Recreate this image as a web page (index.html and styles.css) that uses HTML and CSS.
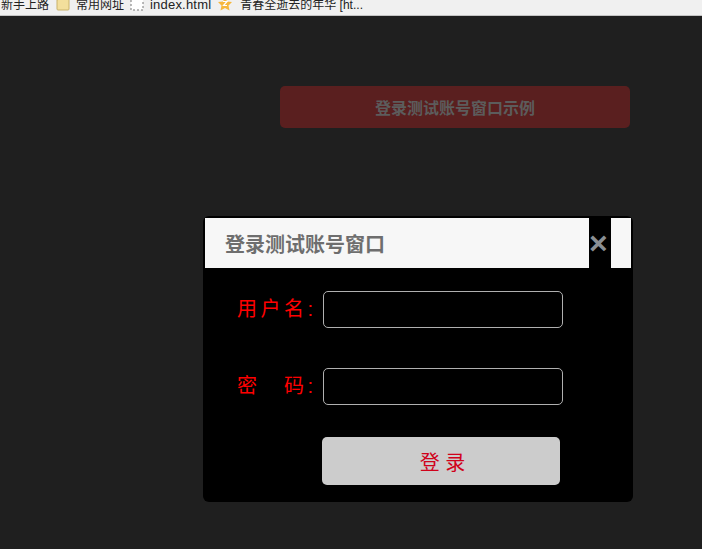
FILE: index.html
```html
<!DOCTYPE html>
<html lang="zh-CN">
<head>
    <meta charset="UTF-8">
    <meta name="viewport" content="width=device-width, initial-scale=1.0">
    <title>登录测试账号窗口示例</title>
    <link rel="stylesheet" href="styles.css">
</head>
<body>
    <!-- 书签栏 -->
    <div class="bookmarks">
        <span class="mark mark-first">新手上路</span>
        <svg class="mark-icon" viewBox="0 0 14 14">
            <path d="M1 3 L1 12 Q1 13 2 13 L12 13 Q13 13 13 12 L13 2 L10 1 L10 2.500 L2 2.500 Z" fill="#f3df9c" stroke="#c9b26a"/>
        </svg>
        <span class="mark">常用网址</span>
        <svg class="mark-icon" viewBox="0 0 14 14">
            <rect x="1" y="1" width="12" height="12" fill="#fff" stroke="#777" stroke-dasharray="2 2"/>
        </svg>
        <span class="mark mark-latin">index.html</span>
        <svg class="mark-icon mark-star" viewBox="0 0 14 14">
            <path d="M7 0 L9 4.500 L14 5 L10.500 8.500 L11.500 13.500 L7 11 L2.500 13.500 L3.500 8.500 L0 5 L5 4.500 Z" fill="#f6b73c"/>
            <path d="M5 4.500 H9 L5.500 8.500 H9" fill="none" stroke="#fff" stroke-width="1.200"/>
        </svg>
        <span class="mark">青春全逝去的年华 [ht...</span>
    </div>

    <div class="page">
        <button class="open-button">登录测试账号窗口示例</button>
    </div>

    <!-- 登录窗口 -->
    <div class="modal">
        <div class="modal-header">
            <h2 class="modal-title">登录测试账号窗口</h2>
            <span class="modal-close">×</span>
            <span class="modal-end"></span>
        </div>
        <form class="modal-body">
            <div class="form-group">
                <label for="username">用户名:</label>
                <input type="text" id="username">
            </div>
            <div class="form-group">
                <label for="password">密　码:</label>
                <input type="password" id="password">
            </div>
            <button type="button" class="login-button">登 录</button>
        </form>
    </div>
</body>
</html>
```

FILE: styles.css
```css
body {
    margin: 0;
    height: 549px;
    overflow: hidden;
    background: #1f1f1f;
    font-family: "Liberation Sans", "Noto Sans CJK SC", sans-serif;
}
.bookmarks {
    display: flex;
    align-items: flex-end;
    height: 15px;
    overflow: hidden;
    background: #f0f0f0;
    border-bottom: 1px solid #c4c4c4;
    font-size: 12px;
    line-height: 14px;
    color: #222;
}
.mark {
    margin-left: 6px;
    margin-right: 6px;
    position: relative;
    top: -3px;
    white-space: nowrap;
}
.mark-first {
    margin-left: 1px;
    margin-right: 7px;
}
.mark-latin {
    font-size: 13px;
    letter-spacing: 0.200px;
}
.mark-icon {
    width: 14px;
    height: 14px;
    flex: none;
    position: relative;
    top: -4px;
}
.mark-star {
    margin-left: 1px;
    margin-right: 2px;
}
.page {
    padding: 70px 72px 0 280px;
}
.open-button {
    display: block;
    width: 350px;
    height: 42px;
    border: none;
    border-radius: 5px;
    background: #5a1f1f;
    color: #5c5c5c;
    font-family: inherit;
    font-size: 16px;
    font-weight: bold;
}
.modal {
    position: absolute;
    left: 203px;
    top: 216px;
    width: 430px;
    height: 286px;
    box-sizing: border-box;
    padding: 2px;
    background: #000;
    border-radius: 6px;
}
.modal-header {
    display: flex;
    height: 50px;
}
.modal-title {
    flex: none;
    width: 384px;
    box-sizing: border-box;
    margin: 0;
    padding-left: 20px;
    background: #f7f7f7;
    color: #6e6e6e;
    font-size: 20px;
    font-weight: bold;
    line-height: 54px;
}
.modal-close {
    flex: none;
    width: 22px;
    padding-right: 4px;
    box-sizing: border-box;
    background: #000;
    color: #8a8f94;
    text-align: center;
    font-size: 32px;
    font-weight: bold;
    line-height: 50px;
}
.modal-end {
    flex: 1;
    background: #f7f7f7;
}
.modal-body {
    padding: 23px 0 0 33px;
}
.form-group {
    display: flex;
    align-items: center;
    margin-bottom: 40px;
}
.form-group label {
    width: 85px;
    margin-top: -4px;
    margin-left: -1px;
    margin-right: 1px;
    color: #f00;
    font-size: 20px;
    letter-spacing: 3.500px;
    white-space: nowrap;
}
.form-group input {
    width: 240px;
    height: 37px;
    box-sizing: border-box;
    background: #000;
    border: 1px solid #b0b0b0;
    border-radius: 5px;
}
.login-button {
    display: block;
    width: 238px;
    height: 48px;
    margin: -8px 0 0 84px;
    padding-left: 9px;
    border: none;
    border-radius: 5px;
    background: #ccc;
    color: #d0021b;
    font-family: inherit;
    font-size: 20px;
}
```
